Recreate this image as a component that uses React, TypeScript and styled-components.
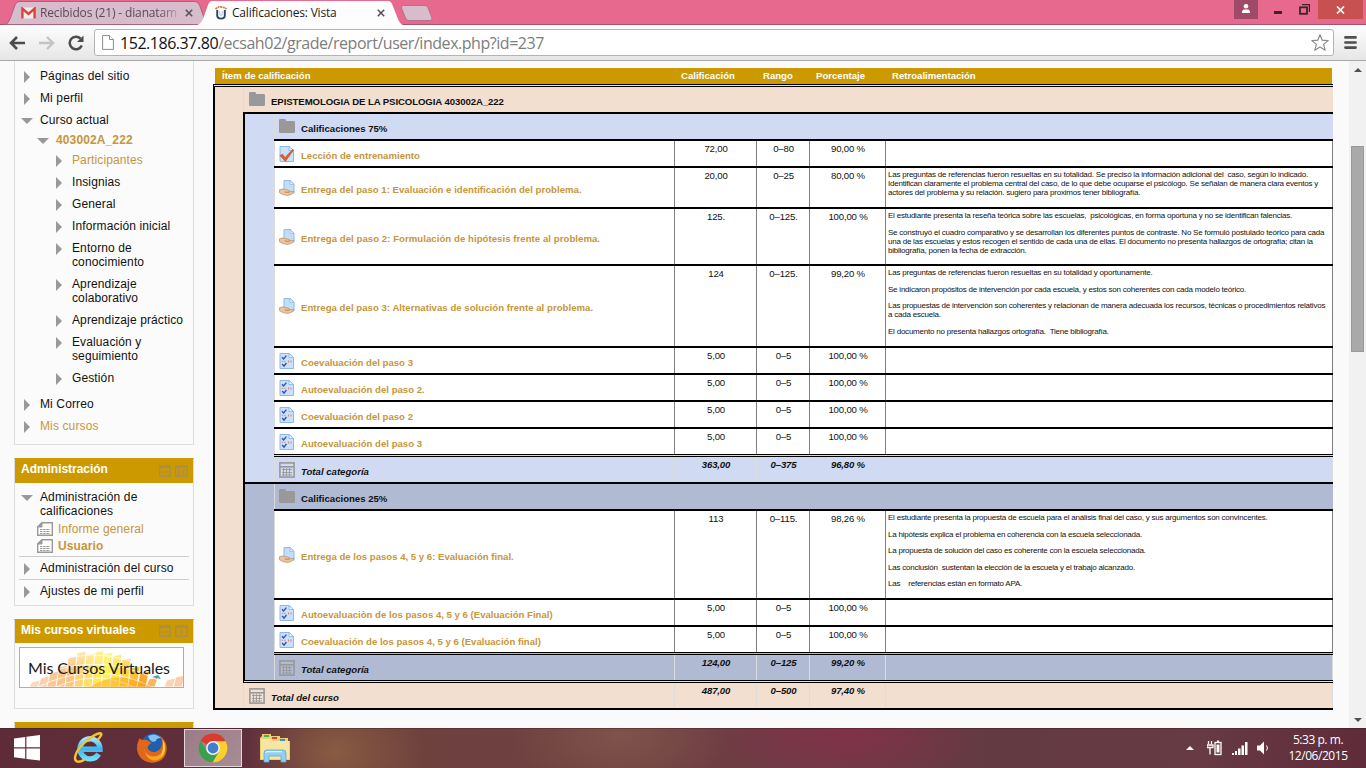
import React from 'react';
import styled, { createGlobalStyle, css } from 'styled-components';

const GOLD = '#cc9900';
const LINK = '#c7963a';
const PEACH = '#f2dfd0';
const BLUE = '#d0daf2';
const SLATE = '#b0bad3';

const GlobalStyle = createGlobalStyle`
  * { box-sizing: border-box; }
  body { margin: 0; background: #fafafa; overflow: hidden; }
  svg { display: block; flex: none; }
`;

const Screen = styled.div`
  display: flex;
  flex-direction: column;
  width: 1366px;
  height: 768px;
  overflow: hidden;
  font-family: 'Liberation Sans', Arial, sans-serif;
  color: #111;
`;

/* ---------- browser window ---------- */

const TitleBar = styled.header`
  display: flex;
  height: 25px;
  background: #e8698e;
  box-shadow: inset 0 -1px 0 #a5536d;
  padding-left: 4px;
  font-family: 'Open Sans', 'Noto Sans', sans-serif;
`;

const Tab = styled.div<{ $active?: boolean }>`
  position: relative;
  display: flex;
  align-items: center;
  width: ${p => (p.$active ? 206 : 202)}px;
  height: 25px;
  margin-left: ${p => (p.$active ? -9 : 0)}px;
  padding-left: ${p => (p.$active ? 18 : 17)}px;
  z-index: ${p => (p.$active ? 1 : 0)};
`;

const TabShape = styled.svg`
  position: absolute;
  left: 0;
  top: 0;
`;

const TabTitle = styled.span<{ $w: number; $fade?: boolean; $ls: number; $ml: number }>`
  position: relative;
  width: ${p => p.$w}px;
  margin-left: ${p => p.$ml}px;
  white-space: nowrap;
  font-size: 12px;
  line-height: 18px;
  letter-spacing: ${p => p.$ls}px;
  color: ${p => (p.$fade ? '#5e4a56' : '#1c1c1c')};
  ${p => p.$fade && css`mask-image: linear-gradient(90deg, #000 86%, rgba(0, 0, 0, .2));`}
`;

const TabIcon = styled.span<{ $ml?: number }>`
  position: relative;
  display: flex;
  margin-left: ${p => p.$ml || 0}px;
`;

const NewTab = styled.svg`
  margin: 5px 0 0 -2px;
`;

const WindowButtons = styled.div`
  display: flex;
  margin-left: auto;
  padding-right: 3px;
`;

const WindowButton = styled.div<{ $w: number; $bg?: string; $pad?: string }>`
  display: flex;
  align-items: center;
  justify-content: center;
  width: ${p => p.$w}px;
  height: 19px;
  padding: ${p => p.$pad || 0};
  background: ${p => p.$bg || 'transparent'};
`;

const Toolbar = styled.div`
  display: flex;
  align-items: center;
  height: 36px;
  padding: 0 9px 0 9px;
  background: linear-gradient(#fdfdfd, #e6e6e6);
  border-bottom: 1px solid #a8a8a8;
`;

const NavIcon = styled.div<{ $ml?: number }>`
  display: flex;
  margin-left: ${p => p.$ml || 0}px;
`;

const AddressBar = styled.div`
  display: flex;
  align-items: center;
  flex: 1;
  height: 27px;
  margin: 0 10px;
  padding: 0 4px 0 7px;
  background: #fff;
  border: 1px solid #b4b4b4;
  border-radius: 3px;
`;

const Url = styled.span`
  flex: 1;
  margin-left: 6px;
  font: 16px/24px 'Open Sans', 'Noto Sans', sans-serif;
  letter-spacing: -0.46px;
  color: #7d7d7d;
  white-space: nowrap;
  b { font-weight: 400; color: #111; }
`;

const Viewport = styled.main`
  display: flex;
  height: 667px;
  background: #fafafa;
  overflow: hidden;
`;

const ScrollBar = styled.div`
  display: flex;
  flex-direction: column;
  align-items: center;
  width: 17px;
  margin-left: auto;
  padding: 7px 0 6px;
  background: #f1f1f1;
`;

const ScrollThumb = styled.div`
  width: 13px;
  height: 206px;
  margin: 74px 0 auto;
  background: #a9a9a9;
  border: 1px solid #999;
`;

/* ---------- sidebar ---------- */

const Sidebar = styled.aside`
  display: flex;
  flex-direction: column;
  gap: 13px;
  width: 180px;
  margin-left: 14px;
  font-size: 12px;
  line-height: 14px;
  letter-spacing: 0.12px;
`;

const Block = styled.section<{ $h: number; $open?: boolean }>`
  flex: none;
  height: ${p => p.$h}px;
  background: #fbfbfb;
  border: 1px solid #ddd;
  border-top-width: ${p => (p.$open ? 0 : 1)}px;
  border-top-color: ${p => (p.$open ? '#ddd' : GOLD)};
`;

const BlockHeader = styled.h2<{ $h: number }>`
  display: flex;
  align-items: center;
  height: ${p => p.$h}px;
  margin: 0;
  padding: 0 5px 4px 6px;
  background: ${GOLD};
  color: #fff;
  font-size: 12px;
  font-weight: bold;
  letter-spacing: -0.04px;
  svg { margin: 3px 0 0 3px; }
  span { flex: 1; }
`;

const TreeRow = styled.div<{ $level: number; $tight?: boolean; $link?: boolean; $bold?: boolean; $mt?: number }>`
  display: flex;
  margin-top: ${p => p.$mt || 0}px;
  padding: ${p => (p.$tight ? 2 : 4)}px 0;
  padding-left: ${p => 6 + p.$level * 16}px;
  color: ${p => (p.$link ? LINK : '#111')};
  font-weight: ${p => (p.$bold ? 'bold' : 'normal')};
  white-space: pre;
`;

const Arrow = styled.i<{ $open?: boolean }>`
  flex: none;
  width: ${p => (p.$open ? 12 : 6)}px;
  height: ${p => (p.$open ? 6 : 12)}px;
  margin: ${p => (p.$open ? '5px 7px 0 0' : '2px 10px 0 3px')};
  background: #999;
  clip-path: ${p => (p.$open ? 'polygon(0 0, 100% 0, 50% 100%)' : 'polygon(0 0, 100% 50%, 0 100%)')};
`;

const Leaf = styled.div<{ $bold?: boolean }>`
  display: flex;
  align-items: center;
  gap: 5px;
  height: 17px;
  padding-left: 22px;
  color: ${LINK};
  font-weight: ${p => (p.$bold ? 'bold' : 'normal')};
`;

const Rule = styled.hr<{ $mt?: number }>`
  height: 1px;
  margin: ${p => p.$mt || 0}px 4px 0;
  border: 0;
  background: #ccc;
`;

const Banner = styled.div`
  position: relative;
  width: 165px;
  height: 41px;
  margin: 4px 0 0 4px;
  border: 1px solid #e3a066;
  background: #fff;
  overflow: hidden;
`;

const BannerText = styled.span`
  position: absolute;
  left: 8px;
  top: 8px;
  font: 16px/24px Lato, Carlito, sans-serif;
  letter-spacing: -0.08px;
  color: #1a1a1a;
  white-space: nowrap;
`;

/* ---------- grade table ---------- */

const Report = styled.div`
  width: 1120px;
  margin: 7px 0 0 19px;
  font-size: 9.6px;
  line-height: 12px;
`;

const HeaderRow = styled.div`
  display: flex;
  align-items: center;
  width: 1117px;
  height: 16px;
  margin-left: 2px;
  background: ${GOLD};
  color: #fff;
  font-weight: bold;
`;

const HeaderCell = styled.div<{ $w?: number }>`
  ${p => (p.$w ? css`width: ${p.$w}px;` : css`flex: 1;`)}
  padding-left: 7px;
`;

const Course = styled.div`
  border-left: 2px solid #000;
  border-top: 3px double #000;
  border-bottom: 2px solid #000;
  background: ${PEACH};
`;

const Categories = styled.div`
  margin-left: 28px;
  border-left: 2px solid #000;
  border-bottom: 3px double #000;
`;

const Category = styled.div<{ $bg: string }>`
  padding-left: 29px;
  background: ${p => p.$bg};
  border-top: 2px solid #000;
  margin-left: -2px;
  border-left: 2px solid #000;
`;

const Row = styled.div<{ $h: number; $bg: string; $line?: 'solid' | 'double'; $indent?: number; $total?: boolean; $wall: string }>`
  display: flex;
  height: ${p => p.$h + (p.$line === 'solid' ? 2 : p.$line === 'double' ? 3 : 0)}px;
  margin-left: ${p => p.$indent || 0}px;
  background: ${p => p.$bg};
  border-top: ${p => (p.$line === 'solid' ? '2px solid #000' : p.$line === 'double' ? '3px double #000' : '0')};
  --wall: ${p => p.$wall};
  --inset: ${p => (p.$indent ? 5 : 4)}px;
  ${p => p.$total && css`font-weight: bold; font-style: italic;`}
`;

const ItemCell = styled.div<{ $link?: boolean; $ls?: number }>`
  display: flex;
  align-items: center;
  flex: 1;
  padding-left: var(--inset);
  border-left: 1px solid #dcdcdc;
  color: ${p => (p.$link ? LINK : '#111')};
  font-weight: bold;
  letter-spacing: ${p => p.$ls || 0}px;
  white-space: nowrap;
`;

const ItemIcon = styled.span<{ $drop?: number }>`
  display: flex;
  width: 22px;
  padding-bottom: ${p => p.$drop || 0}px;
`;

const ItemName = styled.span`
  padding-top: 4px;
`;

const ValueCell = styled.div<{ $w: number }>`
  width: ${p => p.$w}px;
  padding: 2px 0 0 1px;
  border-left: 1px solid var(--wall);
  text-align: center;
  letter-spacing: -0.18px;
`;

const FeedbackCell = styled.div`
  width: 448px;
  padding: 2px 0 0 2px;
  border-left: 1px solid var(--wall);
  border-right: 1px solid var(--wall);
  font-size: 8px;
  line-height: 9px;
  letter-spacing: -0.224px;
  white-space: pre;
  p { margin: 0 0 7.6px; }
`;

/* ---------- taskbar ---------- */

const Taskbar = styled.footer`
  display: flex;
  align-items: center;
  height: 40px;
  color: #fff;
  background:
    radial-gradient(ellipse 90px 70px at 335px 24px, rgba(142, 98, 66, .85), transparent),
    radial-gradient(ellipse 110px 60px at 620px 8px, rgba(134, 92, 78, .7), transparent),
    radial-gradient(ellipse 130px 50px at 850px 6px, rgba(140, 44, 76, .7), transparent),
    linear-gradient(90deg, #5d2c38 0, #5f2f3b 240px, #6e413e 400px, #6f4042 620px, #6e3c44 760px, #643a42 1000px, #673a44 1200px, #5f2b3a 1366px);
  box-shadow: inset 0 1px 0 rgba(50, 20, 30, .35);
`;

const TaskButton = styled.div<{ $w: number; $active?: boolean }>`
  display: flex;
  align-items: center;
  justify-content: center;
  width: ${p => p.$w}px;
  height: 38px;
  ${p => p.$active && css`
    margin-left: 4px;
    background: linear-gradient(135deg, #9a7c86, #a88c94);
    border: 1px solid #e4d6da;
  `}
`;

const Tray = styled.div`
  display: flex;
  align-items: center;
  gap: 9px;
  margin-left: auto;
`;

const TrayToggle = styled.svg`
  margin-right: 4px;
`;

const Clock = styled.div`
  width: 70px;
  margin: 0 13px 0 3px;
  text-align: center;
  font: 12px/16px 'Open Sans', 'Noto Sans', sans-serif;
  letter-spacing: -0.45px;
`;

/* ---------- icons ---------- */

const FolderIcon = () => (
  <svg width="16" height="14" viewBox="0 0 16 14">
    <path fill="#999" d="M0 1.2Q0 0 1.2 0H5.6Q6.8 0 7 1.2V2H14.6Q16 2 16 3.2V12.8Q16 14 14.8 14H1.2Q0 14 0 12.8Z" />
  </svg>
);

const CalcIcon = () => (
  <svg width="16" height="16" viewBox="0 0 16 16" fill="none" stroke="#999">
    <rect x=".9" y=".9" width="14.2" height="14.2" strokeWidth="1.6" />
    <path d="M1 4.8H15" strokeWidth="1.6" />
    <path d="M3 7.5H13M3 10.5H13M3 13H13M4.5 6V14M7.5 6V14M10.5 6V14" strokeWidth=".9" />
  </svg>
);

const Sheet = () => (
  <g>
    <path d="M1 .5H10L14.500 4.500V15.500H1Z" fill="#c9e1fa" stroke="#8fb8e6" />
    <path d="M10 .5V4.500H14.500Z" fill="#eef7ff" stroke="#8fb8e6" strokeWidth=".9" />
  </g>
);

const LessonIcon = () => (
  <svg width="16" height="16" viewBox="0 0 16 16">
    <Sheet />
    <path d="M.8 9.4L3.6 8.2L6 11.6L13.8 3.2L14.6 4L6.4 15.4Z" fill="#d9622b" stroke="#b9481a" strokeWidth=".5" />
  </svg>
);

const AssignIcon = () => (
  <svg width="16" height="16" viewBox="0 0 16 16">
    <path d="M5 .6H11.2L15 4.2V13H5Z" fill="#c3dff8" stroke="#8fb8e6" />
    <path d="M11 .6V4.4H15Z" fill="#eef7ff" stroke="#8fb8e6" strokeWidth=".8" />
    <path d="M.4 9.8Q3 8.4 6.4 9.4L10.4 10.6Q11.2 11.8 9.6 12L13.4 11.4Q15 11 15.2 12Q12.4 15.2 8.8 15.4Q4 15.4 .6 12.8Z" fill="#ecc59c" stroke="#b88a62" strokeWidth=".7" />
    <path d="M5.6 12L9.8 12.4" stroke="#a8764e" strokeWidth=".8" />
  </svg>
);

const QuizIcon = () => (
  <svg width="16" height="16" viewBox="0 0 16 16">
    <Sheet />
    <path d="M3 4.2L4.600 6L7.400 2.600M3.200 11L5 13.200L7.400 10" fill="none" stroke="#3c50b4" strokeWidth="1.4" />
    <path d="M2.800 8.300H7.600" stroke="#d88" strokeWidth="1" strokeDasharray="1.4 1" />
    <path d="M9.500 7.500V9.500M12 7.500V9.500" stroke="#c88" strokeWidth="1.1" />
  </svg>
);

const ReportIcon = () => (
  <svg width="16" height="14" viewBox="0 0 16 14" fill="none" stroke="#999">
    <path d="M5 .7H15.3V13.3H.7V5Z" strokeWidth="1.4" fill="#fff" />
    <path d="M.5 5L5 .5V5Z" fill="#999" />
    <path d="M3 7.5H13M3 9.5H13M3 11.5H13" strokeDasharray="2.4 .8" />
  </svg>
);

const BlockButtons = ({ dock }: { dock: 'arrow' | 'dot' }) => (
  <>
    <svg width="12" height="12" viewBox="0 0 12 12" fill="none" stroke="#ab8f4a">
      <path d="M0 1.5H12" strokeWidth="3" />
      <path d="M.8 1V11.2H11.2V1M3.4 7H8.6" strokeWidth="1.5" />
    </svg>
    <svg width="14" height="12" viewBox="0 0 14 12" fill="none" stroke="#ab8f4a">
      <path d="M1 1.5H14" strokeWidth="3" />
      <path d="M1.8 1V11.2H13.2V1" strokeWidth="1.5" />
      {dock === 'arrow'
        ? <path d="M5 3V11M10.500 4.500L8.500 7L10.500 9.500" strokeWidth="1.5" />
        : <path d="M6 7H9" strokeWidth="3" />}
    </svg>
  </>
);

const GmailIcon = () => (
  <svg width="15" height="12" viewBox="0 0 15 12">
    <rect x=".5" y=".5" width="14" height="11" rx="1" fill="#f4eaee" />
    <path d="M1.4 11.5V1.6L7.5 7L13.6 1.6V11.5" fill="none" stroke="#d84437" strokeWidth="2.4" />
  </svg>
);

const SiteIcon = () => (
  <svg width="12" height="14" viewBox="0 0 12 14" fill="none">
    <path d="M2.200 4V9.500Q2.200 12.600 6 12.600T9.800 9.500V4" stroke="#29466b" strokeWidth="1.900" />
    <path d="M4.800 5V9Q6 10.200 7.200 9V5" stroke="#a9b8c8" strokeWidth=".8" />
    <path d="M.6 3.2Q2.6 .6 6 .9T11.4 3.2" stroke="#e0762e" strokeWidth="1.7" strokeDasharray="2 .6" />
  </svg>
);

const CloseTabIcon = () => (
  <svg width="8" height="8" viewBox="0 0 8 8" stroke="#5c5058" strokeWidth="1.6">
    <path d="M.8 .8L7.2 7.2M7.2 .8L.8 7.2" />
  </svg>
);

const WindowsLogo = () => (
  <svg width="26" height="26" viewBox="0 0 26 26" fill="#fff">
    <path d="M0 3.6L11.2 2V12.3H0ZM12.4 1.8L26 0V12.3H12.4ZM0 13.5H11.2V23.8L0 22.3ZM12.4 13.5H26V25.6L12.4 24Z" />
  </svg>
);

const ExplorerLogo = () => (
  <svg width="32" height="32" viewBox="0 0 32 32" fill="none">
    <defs>
      <linearGradient id="ie" x1="0" y1="0" x2="0" y2="1">
        <stop offset="0" stopColor="#9be4fb" /><stop offset=".5" stopColor="#3bb5ee" /><stop offset="1" stopColor="#6fdcfa" />
      </linearGradient>
    </defs>
    <path d="M25.600 22A10 10 0 1 1 27 17.200H9.500" stroke="url(#ie)" strokeWidth="5.400" />
    <path d="M24.5 8.2C31.6 .2 28-.2 20.8 3.6C12 8.4 3.6 17.6 2.2 24.4C1 31 6.4 30.6 11.6 27.6" stroke="#f3c32c" strokeWidth="2.4" />
  </svg>
);

const FirefoxLogo = () => (
  <svg width="32" height="32" viewBox="0 0 32 32">
    <circle cx="17" cy="14" r="12.4" fill="#1f5fae" />
    <path d="M12 4Q19 0 25 6Q20 6 20 9Q15 12 12 4Z" fill="#7fc3f2" />
    <path d="M3.4 6.2Q5.2 8.4 8.2 7.8Q11.6 7.2 13 9.6Q15.4 10 15 11.2Q12 13 11.4 15.6Q13.2 20.6 19 20Q25.6 18.4 26.4 11Q26 6.6 23.4 3.4Q31 8.4 30.8 17Q29.6 29.6 17 30.8Q3.4 30.6 1 17.6Q.6 11.4 3.4 6.2Z" fill="#e0661c" />
    <path d="M8.4 15.4Q9 24.6 18.2 24.6Q25.6 24 28.2 15.2Q30.4 25.4 20 28.6Q9.4 28.6 8.4 15.4Z" fill="#f7a51f" />
    <path d="M26.6 8Q30.4 13 28.4 20Q26.8 24 24.6 25Q28 17 26.6 8Z" fill="#fbd04a" />
  </svg>
);

const ChromeLogo = () => (
  <svg width="30" height="30" viewBox="0 0 30 30">
    <path d="M15 15L2.6 7.8A14.3 14.3 0 0 1 27.4 7.8Z" fill="#db3b2e" />
    <path d="M15 8.2H27.6A14.3 14.3 0 0 1 14.6 29.3L21 18.5Z" fill="#fbd02b" />
    <path d="M2.6 7.8A14.3 14.3 0 0 0 14.6 29.3L20.8 18.4L15 15L9 18.4Z" fill="#36a34a" />
    <circle cx="15" cy="15" r="6.9" fill="#f3f3f3" />
    <circle cx="15" cy="15" r="5.4" fill="#3f7ed0" />
  </svg>
);

const FilesLogo = () => (
  <svg width="32" height="30" viewBox="0 0 32 30">
    <path d="M3 3V1H12V3H21V5H29V8H31V27H1V5Z" fill="#e9cf79" />
    <path d="M2 6H12L14 8H30V26H2Z" fill="#f6e6a2" />
    <path d="M5 2H10V4H5Z" fill="#41b649" />
    <path d="M13 4H18V6H13Z" fill="#d9472c" />
    <path d="M21 6H26V8H21Z" fill="#3b8ed8" />
    <path d="M5 29V20Q5 17 8 17H24Q27 17 27 20V29H22V23H10V29Z" fill="#8fd0ee" stroke="#5fa8d0" strokeWidth=".8" />
    <path d="M7 20Q7 18.6 9 18.6H23" stroke="#dff4fd" strokeWidth="1.2" fill="none" />
  </svg>
);

/* columns of mosaic tiles: left edge, top of the column, colour */
const mosaic: [number, number, string][] = [
  [12, 34, '#fbd9be'], [21, 30, '#fad0ae'], [30, 25, '#fbc795'], [39, 19, '#fcc488'], [48, 10, '#fdc680'],
  [57, 5, '#fed37a'], [66, 7, '#ffdf6a'], [75, 4, '#ffe85a'], [84, 6, '#ffee4e'], [93, 8, '#ffe548'],
  [102, 12, '#ffd43e'], [111, 20, '#fdbd34'], [120, 25, '#fba62c'], [129, 31, '#fab65c'], [147, 32, '#f9d3b4'], [156, 29, '#f8cfae'],
];

const BannerArt = () => (
  <svg width="163" height="39" viewBox="0 0 163 39">
    <defs>
      <linearGradient id="glow" x1="0" y1="0" x2="0" y2="1">
        <stop offset="0" stopColor="#fff" stopOpacity=".5" /><stop offset=".6" stopColor="#fff" stopOpacity="0" />
      </linearGradient>
    </defs>
    {mosaic.map(([x, y, fill]) => (
      <path key={x} d={`M${x} ${y}L${x + 9} ${y - 2}L${x + 6} 39H${x - 3}Z`} fill={fill} stroke="#fff" strokeWidth=".8" />
    ))}
    <path d="M0 30Q70 -14 140 26M4 36Q70 -2 140 33M16 40Q74 10 134 40M34 40Q76 20 116 40" fill="none" stroke="#fff" strokeOpacity=".8" />
    <path d="M70 39Q98 20 132 39Z" fill="#f9a01e" fillOpacity=".45" />
    <rect width="163" height="39" fill="url(#glow)" />
    <path d="M132 29L138 27L141 31L136 30Z" fill="#3aa7b8" />
  </svg>
);

/* ---------- content ---------- */

type Kind = 'lesson' | 'assign' | 'quiz';
interface Grade {
  kind: Kind;
  name: string;
  grade: string;
  range: string;
  percent: string;
  h?: number;
  ls?: number;
  feedback?: string[];
}

const first: Grade[] = [
  { kind: 'lesson', name: 'Lección de entrenamiento', grade: '72,00', range: '0–80', percent: '90,00 %' },
  {
    kind: 'assign', name: 'Entrega del paso 1: Evaluación e identificación del problema.', grade: '20,00', range: '0–25', percent: '80,00 %', h: 39, ls: 0.02,
    feedback: ['Las preguntas de referencias fueron resueltas en su totalidad. Se precisó la información adicional del  caso, según lo indicado.\nIdentifican claramente el problema central del caso, de lo que debe ocuparse el psicólogo. Se señalan de manera clara eventos y\nactores del problema y su relación. sugiero para proximos tener bibliografía.'],
  },
  {
    kind: 'assign', name: 'Entrega del paso 2: Formulación de hipótesis frente al problema.', grade: '125.', range: '0–125.', percent: '100,00 %', h: 55, ls: 0.05,
    feedback: [
      'El estudiante presenta la reseña teórica sobre las escuelas,  psicológicas, en forma oportuna y no se identifican falencias.',
      'Se construyó el cuadro comparativo y se desarrollan los diferentes puntos de contraste. No Se formuló postulado teórico para cada\nuna de las escuelas y estos recogen el sentido de cada una de ellas. El documento no presenta hallazgos de ortografía; citan la\nbibliografía, ponen la fecha de extracción.',
    ],
  },
  {
    kind: 'assign', name: 'Entrega del paso 3: Alternativas de solución frente al problema.', grade: '124', range: '0–125.', percent: '99,20 %', h: 80, ls: 0.03,
    feedback: [
      'Las preguntas de referencias fueron resueltas en su totalidad y oportunamente.',
      'Se indicaron propósitos de intervención por cada escuela, y estos son coherentes con cada modelo teórico.',
      'Las propuestas de intervención son coherentes y relacionan de manera adecuada los recursos, técnicas o procedimientos relativos\na cada escuela.',
      'El documento no presenta hallazgos ortografía.  Tiene bibliografía.',
    ],
  },
  { kind: 'quiz', name: 'Coevaluación del paso 3', grade: '5,00', range: '0–5', percent: '100,00 %' },
  { kind: 'quiz', name: 'Autoevaluación del paso 2.', grade: '5,00', range: '0–5', percent: '100,00 %' },
  { kind: 'quiz', name: 'Coevaluación del paso 2', grade: '5,00', range: '0–5', percent: '100,00 %' },
  { kind: 'quiz', name: 'Autoevaluación del paso 3', grade: '5,00', range: '0–5', percent: '100,00 %' },
];

const second: Grade[] = [
  {
    kind: 'assign', name: 'Entrega de los pasos 4, 5 y 6: Evaluación final.', grade: '113', range: '0–115.', percent: '98,26 %', h: 87,
    feedback: [
      'El estudiante presenta la propuesta de escuela para el análisis final del caso, y sus argumentos son convincentes.',
      'La hipótesis explica el problema en coherencia con la escuela seleccionada.',
      'La propuesta de solución del caso es coherente con la escuela seleccionada.',
      'Las conclusión  sustentan la elección de la escuela y el trabajo alcanzado.',
      'Las    referencias están en formato APA.',
    ],
  },
  { kind: 'quiz', name: 'Autoevaluaciòn de los pasos 4, 5 y 6 (Evaluación Final)', grade: '5,00', range: '0–5', percent: '100,00 %' },
  { kind: 'quiz', name: 'Coevaluación de los pasos 4, 5 y 6 (Evaluación final)', grade: '5,00', range: '0–5', percent: '100,00 %' },
];

const icons: Record<Kind, React.ReactElement> = {
  lesson: <LessonIcon />,
  assign: <AssignIcon />,
  quiz: <QuizIcon />,
};

const Title = ({ text, bg, line, indent, ls }: { text: string; bg: string; line?: 'solid'; indent?: number; ls?: number }) => (
  <Row $h={25} $bg={bg} $line={line} $indent={indent} $wall="transparent">
    <ItemCell $ls={ls}>
      <ItemIcon $drop={2}><FolderIcon /></ItemIcon>
      <ItemName>{text}</ItemName>
    </ItemCell>
  </Row>
);

const Values = ({ grade, range, percent, feedback }: Pick<Grade, 'grade' | 'range' | 'percent' | 'feedback'>) => (
  <>
    <ValueCell $w={82}>{grade}</ValueCell>
    <ValueCell $w={53}>{range}</ValueCell>
    <ValueCell $w={76}>{percent}</ValueCell>
    <FeedbackCell>{feedback?.map(t => <p key={t}>{t}</p>)}</FeedbackCell>
  </>
);

const GradeRow = ({ item }: { item: Grade }) => (
  <Row $h={item.h || 25} $bg="#fff" $line="solid" $wall="#808080">
    <ItemCell $link $ls={item.ls}>
      <ItemIcon>{icons[item.kind]}</ItemIcon>
      <ItemName>{item.name}</ItemName>
    </ItemCell>
    <Values {...item} />
  </Row>
);

const TotalRow = ({ text, bg, line, indent, ...v }: { text: string; bg: string; line?: 'double'; indent?: number; grade: string; range: string; percent: string }) => (
  <Row $h={25} $bg={bg} $line={line} $indent={indent} $total $wall="#dcdcdc">
    <ItemCell>
      <ItemIcon><CalcIcon /></ItemIcon>
      <ItemName>{text}</ItemName>
    </ItemCell>
    <Values {...v} />
  </Row>
);

const tree: { t: string; level: number; open?: boolean; tight?: boolean; link?: boolean; bold?: boolean; mt?: number }[] = [
  { t: 'Páginas del sitio', level: 0, mt: 4 },
  { t: 'Mi perfil', level: 0 },
  { t: 'Curso actual', level: 0, open: true },
  { t: '403002A_222', level: 1, open: true, tight: true, link: true, bold: true },
  { t: 'Participantes', level: 2, link: true },
  { t: 'Insignias', level: 2 },
  { t: 'General', level: 2 },
  { t: 'Información inicial', level: 2 },
  { t: 'Entorno de\nconocimiento', level: 2 },
  { t: 'Aprendizaje\ncolaborativo', level: 2 },
  { t: 'Aprendizaje práctico', level: 2 },
  { t: 'Evaluación y\nseguimiento', level: 2 },
  { t: 'Gestión', level: 2 },
  { t: 'Mi Correo', level: 0, mt: 4 },
  { t: 'Mis cursos', level: 0, link: true },
];

export default function App() {
  return (
    <Screen>
      <GlobalStyle />
      <TitleBar>
        <Tab>
          <TabShape width="202" height="25" viewBox="0 0 202 25">
            <path d="M1 24.5Q4 24 6 19L11 5Q12.500 1.500 15 1.500H191Q194 1.500 195.500 5L201 20V24.500Z" fill="#d7bccb" stroke="#a8627c" />
          </TabShape>
          <TabIcon><GmailIcon /></TabIcon>
          <TabTitle $w={138} $ml={4} $fade $ls={-0.15}>Recibidos (21) - dianatam</TabTitle>
          <TabIcon $ml={7}><CloseTabIcon /></TabIcon>
        </Tab>
        <Tab $active>
          <TabShape width="206" height="25" viewBox="0 0 206 25">
            <path d="M0 25Q4 24 6 19L11 5Q12.500 1 15 1H191Q194 1 195.500 5L201 19Q203 24 206 25Z" fill="#fdfdfd" />
          </TabShape>
          <TabIcon><SiteIcon /></TabIcon>
          <TabTitle $w={143} $ml={5} $ls={-0.2}>Calificaciones: Vista</TabTitle>
          <TabIcon $ml={2}><CloseTabIcon /></TabIcon>
        </Tab>
        <NewTab width="32" height="16" viewBox="0 0 32 16">
          <path d="M.5 3Q0 .5 2.500 .5H24Q26 .5 27 2.500L31 13Q31.500 15.500 29 15.500H7.500Q5.500 15.500 4.500 13Z" fill="#d7bccb" stroke="#b5708a" />
        </NewTab>
        <WindowButtons>
          <WindowButton $w={24} $bg="#9f4a68" $pad="0 0 3px">
            <svg width="10" height="9" viewBox="0 0 10 9" fill="#fff"><circle cx="5" cy="2.300" r="2.300" /><path d="M1 9Q1 5.500 3 5.500H7Q9 5.500 9 9Z" /></svg>
          </WindowButton>
          <WindowButton $w={40} $pad="5px 0 0">
            <svg width="8" height="3" viewBox="0 0 8 3"><rect width="8" height="3" fill="#43202c" /></svg>
          </WindowButton>
          <WindowButton $w={20} $pad="0 8px 0 0">
            <svg width="11" height="11" viewBox="0 0 11 11" fill="none" stroke="#43202c"><path d="M3 .6H10.400V8" strokeWidth="1.200" /><rect x="1" y="3.300" width="7" height="6.500" strokeWidth="1.800" /></svg>
          </WindowButton>
          <WindowButton $w={45} $bg="#c75050">
            <svg width="9" height="8" viewBox="0 0 9 8" stroke="#fff" strokeWidth="1.700"><path d="M1 .5L8 7.500M8 .5L1 7.500" /></svg>
          </WindowButton>
        </WindowButtons>
      </TitleBar>

      <Toolbar>
        <NavIcon>
          <svg width="16" height="14" viewBox="0 0 16 14" fill="none" stroke="#4c4c4c" strokeWidth="2.600"><path d="M2 7H16M8 1L2 7L8 13" /></svg>
        </NavIcon>
        <NavIcon $ml={14}>
          <svg width="16" height="14" viewBox="0 0 16 14" fill="none" stroke="#c4c4c4" strokeWidth="2.400"><path d="M0 7H14M8 1L14 7L8 13" /></svg>
        </NavIcon>
        <NavIcon $ml={13}>
          <svg width="16" height="16" viewBox="0 0 16 16" fill="none" stroke="#4c4c4c" strokeWidth="2.500"><path d="M13.800 10.500A6.300 6.300 0 1 1 12.600 3.600" /><path d="M15.500 .5V7H9Z" fill="#4c4c4c" stroke="none" /></svg>
        </NavIcon>
        <AddressBar>
          <svg width="12" height="15" viewBox="0 0 12 15" fill="#fff" stroke="#8c8c8c"><path d="M.6 .6H7.500L11.400 4.500V14.400H.6Z" /><path d="M7.500 .6V4.500H11.400" /></svg>
          <Url><b>152.186.37.80</b>/ecsah02/grade/report/user/index.php?id=237</Url>
          <svg width="18" height="17" viewBox="0 0 18 17" fill="#fff" stroke="#8a8a8a" strokeWidth="1.200" strokeLinejoin="round"><path d="M9 .8L11.200 6.200L17.200 6.600L12.600 10.400L14.200 16.200L9 13L3.800 16.200L5.400 10.400L.8 6.600L6.800 6.200Z" /></svg>
        </AddressBar>
        <svg width="13" height="13" viewBox="0 0 13 13" stroke="#4f4f4f" strokeWidth="2.600" strokeLinecap="round"><path d="M1.400 1.400H11.600M1.400 6.500H11.600M1.400 11.600H11.600" /></svg>
      </Toolbar>

      <Viewport>
        <Sidebar>
          <Block $h={384} $open>
            {tree.map(n => (
              <TreeRow key={n.t} $level={n.level} $tight={n.tight} $link={n.link} $bold={n.bold} $mt={n.mt}>
                <Arrow $open={n.open} />
                {n.t}
              </TreeRow>
            ))}
          </Block>
          <Block $h={148}>
            <BlockHeader $h={24}><span>Administración</span><BlockButtons dock="arrow" /></BlockHeader>
            <TreeRow $level={0} $mt={5} $tight><Arrow $open />{'Administración de\ncalificaciones'}</TreeRow>
            <Leaf><ReportIcon />Informe general</Leaf>
            <Leaf $bold><ReportIcon />Usuario</Leaf>
            <Rule $mt={2} />
            <TreeRow $level={0}><Arrow />Administración del curso</TreeRow>
            <Rule />
            <TreeRow $level={0}><Arrow />Ajustes de mi perfil</TreeRow>
          </Block>
          <Block $h={90}>
            <BlockHeader $h={23}><span>Mis cursos virtuales</span><BlockButtons dock="dot" /></BlockHeader>
            <Banner><BannerArt /><BannerText>Mis Cursos Virtuales</BannerText></Banner>
          </Block>
          <Block $h={40}><BlockHeader $h={24} /></Block>
        </Sidebar>

        <Report>
          <HeaderRow>
            <HeaderCell>Ítem de calificación</HeaderCell>
            <HeaderCell $w={82}>Calificación</HeaderCell>
            <HeaderCell $w={53}>Rango</HeaderCell>
            <HeaderCell $w={76}>Porcentaje</HeaderCell>
            <HeaderCell $w={447}>Retroalimentación</HeaderCell>
          </HeaderRow>
          <Course>
            <Title text="EPISTEMOLOGIA DE LA PSICOLOGIA 403002A_222" bg={PEACH} indent={28} ls={-0.08} />
            <Categories>
              <Category $bg={BLUE}>
                <Title text="Calificaciones 75%" bg={BLUE} />
                {first.map(g => <GradeRow key={g.name} item={g} />)}
                <TotalRow text="Total categoría" bg={BLUE} line="double" grade="363,00" range="0–375" percent="96,80 %" />
              </Category>
              <Category $bg={SLATE}>
                <Title text="Calificaciones 25%" bg={SLATE} />
                {second.map(g => <GradeRow key={g.name} item={g} />)}
                <TotalRow text="Total categoría" bg={SLATE} line="double" grade="124,00" range="0–125" percent="99,20 %" />
              </Category>
            </Categories>
            <TotalRow text="Total del curso" bg={PEACH} indent={28} grade="487,00" range="0–500" percent="97,40 %" />
          </Course>
        </Report>

        <ScrollBar>
          <svg width="8" height="4" viewBox="0 0 8 4" fill="#505050"><path d="M4 0L8 4H0Z" /></svg>
          <ScrollThumb />
          <svg width="8" height="4" viewBox="0 0 8 4" fill="#505050"><path d="M4 4L0 0H8Z" /></svg>
        </ScrollBar>
      </Viewport>

      <Taskbar>
        <TaskButton $w={54}><WindowsLogo /></TaskButton>
        <TaskButton $w={70}><ExplorerLogo /></TaskButton>
        <TaskButton $w={56}><FirefoxLogo /></TaskButton>
        <TaskButton $w={58} $active><ChromeLogo /></TaskButton>
        <TaskButton $w={66}><FilesLogo /></TaskButton>
        <Tray>
          <TrayToggle width="8" height="4" viewBox="0 0 8 4" fill="#fff"><path d="M4 0L8 4H0Z" /></TrayToggle>
          <svg width="16" height="16" viewBox="0 0 16 16" fill="none" stroke="#fff"><rect x="8" y="2.500" width="6" height="12" strokeWidth="1.300" /><path d="M9.500 4.500H12.500V12.500H9.500Z" fill="#fff" stroke="none" /><path d="M10 1.200H12" strokeWidth="1.500" /><path d="M1.500 1V4M4.500 1V4M0 5H6V7.500H0ZM3 8V14.500" strokeWidth="1.300" /></svg>
          <svg width="16" height="13" viewBox="0 0 16 13" fill="#fff"><path d="M0 11H2V13H0ZM3 9H5V13H3ZM6 6.500H8.500V13H6ZM9.500 3.500H12V13H9.500ZM13 0H15.500V13H13Z" /></svg>
          <svg width="14" height="14" viewBox="0 0 14 14" fill="#fff"><path d="M0 4.500H3L7 .5V13.500L3 9.500H0Z" /><path d="M9.500 4.500Q11.500 7 9.500 9.500" fill="none" stroke="#fff" /></svg>
          <Clock>5:33 p. m.<br />12/06/2015</Clock>
        </Tray>
      </Taskbar>
    </Screen>
  );
}
